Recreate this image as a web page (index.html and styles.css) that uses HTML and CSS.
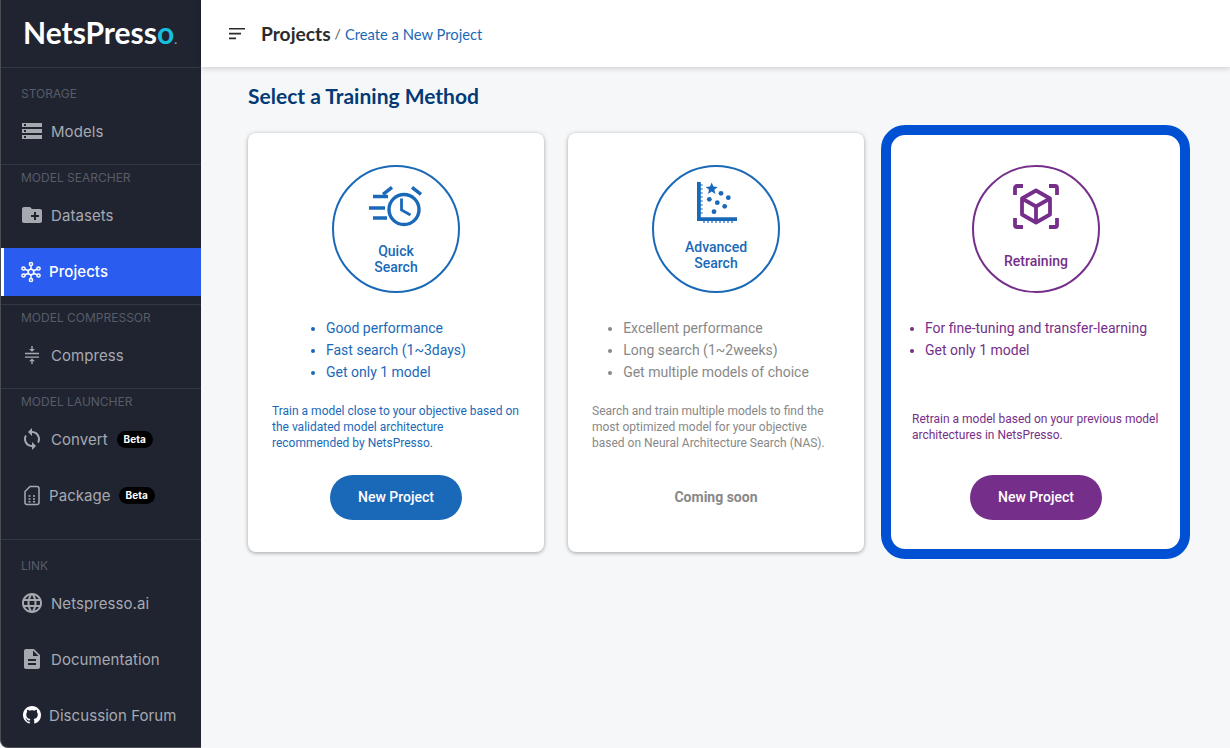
FILE: index.html
```html
<!DOCTYPE html>
<html lang="en">
<head>
    <meta charset="UTF-8">
    <meta name="viewport" content="width=device-width, initial-scale=1.0">
    <title>NetsPresso</title>
    <link rel="stylesheet" href="styles.css">
</head>
<body>
<div class="app">
    <nav class="sidebar">
        <div class="logo">NetsPress<span class="logoO">o</span><span class="logoDot">.</span></div>

        <div class="section first">
            <div class="label">STORAGE</div>
            <a class="item"><svg class="icon" viewBox="0 0 24 24"><path d="M2 20h20v-4H2v4zm2-3h2v2H4v-2zM2 4v4h20V4H2zm4 3H4V5h2v2zm-4 7h20v-4H2v4zm2-3h2v2H4v-2z"/></svg>Models</a>
        </div>

        <div class="section">
            <div class="label">MODEL SEARCHER</div>
            <a class="item"><svg class="icon" viewBox="0 0 24 24"><path d="M20 6h-8l-2-2H4c-1.11 0-1.99.89-1.99 2L2 18c0 1.11.89 2 2 2h16c1.11 0 2-.89 2-2V8c0-1.11-.89-2-2-2zm-1 8h-3v3h-2v-3h-3v-2h3V9h2v3h3v2z"/></svg>Datasets</a>
            <a class="item active"><svg class="icon outline" viewBox="0 0 24 24" stroke="#fff" stroke-width="1.5"><circle cx="12" cy="12" r="2.8"/><circle cx="12" cy="4" r="1.6"/><circle cx="12" cy="20" r="1.6"/><circle cx="4.500" cy="8.500" r="1.6"/><circle cx="19.500" cy="8.500" r="1.6"/><circle cx="4.500" cy="15.500" r="1.6"/><circle cx="19.500" cy="15.500" r="1.6"/><path d="M12 5.600v3.600M12 14.800v3.600M6 9.200l3.500 1.600M18 9.200l-3.500 1.600M6 14.800l3.500-1.600M18 14.800l-3.500-1.600"/></svg>Projects</a>
        </div>

        <div class="section compress">
            <div class="label">MODEL COMPRESSOR</div>
            <a class="item"><svg class="icon" viewBox="0 0 24 24"><path d="M5 9.800h14v1.400H5zM5 13.400h14v1.400H5zM11.300 3h1.400v3H15l-3 2.700L9 6h2.300zM12 15.600l3 2.700h-2.300V21h-1.400v-2.700H9z"/></svg>Compress</a>
        </div>

        <div class="section launcher">
            <div class="label">MODEL LAUNCHER</div>
            <a class="item"><svg class="icon" viewBox="0 0 24 24"><path d="M12 4V1L8 5l4 4V6c3.310 0 6 2.690 6 6 0 1.010-.25 1.970-.7 2.800l1.460 1.460C19.540 15.030 20 13.570 20 12c0-4.420-3.580-8-8-8zm0 14c-3.310 0-6-2.690-6-6 0-1.010.25-1.970.7-2.800L5.240 7.740C4.460 8.970 4 10.430 4 12c0 4.420 3.580 8 8 8v3l4-4-4-4v3z"/></svg>Convert<span class="beta">Beta</span></a>
            <a class="item tight"><svg class="icon outline" viewBox="0 0 24 24" stroke="#a7a9b0" stroke-width="1.500"><path d="M10 3.500h7a2 2 0 0 1 2 2v14a2 2 0 0 1-2 2H7a2 2 0 0 1-2-2V8.500z"/><path d="M8.500 13h2M13 13h2M8.500 16h2M13 16h2M8.500 18.800h2M13 18.800h2"/></svg>Package<span class="beta">Beta</span></a>
        </div>

        <div class="section links">
            <div class="label">LINK</div>
            <a class="item"><svg class="icon" viewBox="0 0 24 24"><path d="M11.990 2C6.470 2 2 6.480 2 12s4.470 10 9.990 10C17.520 22 22 17.520 22 12S17.520 2 11.990 2zm6.930 6h-2.950c-.32-1.250-.78-2.450-1.380-3.560 1.840.63 3.370 1.910 4.330 3.560zM12 4.040c.83 1.200 1.480 2.530 1.910 3.960h-3.820c.43-1.430 1.080-2.760 1.910-3.960zM4.260 14C4.100 13.360 4 12.690 4 12s.1-1.360.26-2h3.380c-.08.66-.14 1.320-.14 2 0 .68.06 1.340.14 2H4.260zm.82 2h2.950c.32 1.250.78 2.450 1.380 3.560-1.840-.63-3.370-1.900-4.330-3.560zm2.950-8H5.080c.96-1.660 2.490-2.930 4.330-3.560C8.810 5.550 8.350 6.750 8.030 8zM12 19.960c-.83-1.200-1.480-2.530-1.910-3.960h3.820c-.43 1.430-1.080 2.760-1.910 3.960zM14.340 14H9.660c-.09-.66-.16-1.320-.16-2 0-.68.07-1.350.16-2h4.680c.09.65.16 1.320.16 2 0 .68-.07 1.340-.16 2zm.25 5.560c.6-1.110 1.060-2.310 1.380-3.560h2.950c-.96 1.650-2.490 2.930-4.330 3.560zM16.360 14c.08-.66.14-1.320.14-2 0-.68-.06-1.340-.14-2h3.380c.16.64.26 1.310.26 2s-.1 1.360-.26 2h-3.380z"/></svg>Netspresso.ai</a>
            <a class="item"><svg class="icon" viewBox="0 0 24 24"><path d="M14 2H6c-1.100 0-1.990.9-1.990 2L4 20c0 1.100.89 2 1.990 2H18c1.100 0 2-.9 2-2V8l-6-6zm2 16H8v-2h8v2zm0-4H8v-2h8v2zm-3-5V3.500L18.500 9H13z"/></svg>Documentation</a>
            <a class="item tight"><svg class="icon github" viewBox="0 0 16 16"><path d="M8 0C3.580 0 0 3.580 0 8c0 3.540 2.290 6.530 5.470 7.590.4.07.55-.17.55-.38 0-.19-.01-.82-.01-1.490-2.010.37-2.530-.49-2.690-.94-.09-.23-.48-.94-.82-1.130-.28-.15-.68-.52-.01-.53.63-.01 1.080.58 1.230.82.72 1.210 1.870.87 2.330.66.07-.52.28-.87.51-1.070-1.780-.2-3.640-.89-3.640-3.950 0-.87.31-1.590.82-2.150-.08-.2-.36-1.020.08-2.120 0 0 .67-.21 2.200.82.64-.18 1.320-.27 2-.27.68 0 1.360.09 2 .27 1.530-1.040 2.200-.82 2.200-.82.44 1.100.16 1.920.08 2.120.51.56.82 1.270.82 2.150 0 3.070-1.870 3.750-3.650 3.950.29.25.54.73.54 1.480 0 1.070-.01 1.930-.01 2.200 0 .21.15.46.55.38A8.013 8.013 0 0016 8c0-4.420-3.580-8-8-8z"/></svg>Discussion Forum</a>
        </div>
    </nav>

    <div class="content">
        <header class="topbar">
            <svg class="menuIcon" viewBox="0 0 16 12"><path d="M0 0h16v1.600H0zM0 4.800h12v1.600H0zM0 9.600h7v1.600H0z"/></svg>
            <span class="crumb">Projects</span>
            <span class="slash">/</span>
            <span class="crumbLink">Create a New Project</span>
        </header>

        <main class="main">
            <h1 class="heading">Select a Training Method</h1>
            <div class="cards">
                <div class="card blue">
                    <div class="circle quick">
                        <svg class="methodIcon" width="54" height="42" viewBox="0 0 54 42" fill="none" stroke="#1a69b8">
                            <circle cx="35" cy="23.500" r="15" stroke-width="3.400"/>
                            <path d="M32.500 12.500V24l9 5" stroke-width="2.800"/>
                            <path d="M4 10.500h15M0 22h16M4 32h14" stroke-width="3.400"/>
                            <path d="M14 8.300l9-7M43 1.300l9 7" stroke-width="3.400"/>
                        </svg>
                        <div class="circleText">Quick<br>Search</div>
                    </div>
                    <ul class="points">
                        <li>Good performance</li>
                        <li>Fast search (1~3days)</li>
                        <li>Get only 1 model</li>
                    </ul>
                    <p class="desc">Train a model close to your objective based on the validated model architecture recommended by NetsPresso.</p>
                    <div class="action"><button class="newBtn">New Project</button></div>
                </div>

                <div class="card gray">
                    <div class="circle advanced">
                        <svg class="methodIcon" width="42" height="42" viewBox="0 0 42 42" fill="#1a69b8">
                            <path d="M2 1h3.800v35.200H42V40H2z"/>
                            <path d="M5 4h2.800M5 8h2.800M5 12h2.800M5 16h2.800M5 20h2.800M5 24h2.800M5 28h2.800M5 32h2.800M9 39v3M13 39v3M17 39v3M21 39v3M25 39v3M29 39v3M33 39v3M37 39v3" stroke="#1a69b8" stroke-width="1.200"/>
                            <path d="M16.700 1.500l1.700 4 4.300.4-3.300 2.800 1 4.200-3.700-2.300-3.700 2.300 1-4.200-3.300-2.800 4.300-.4z"/>
                            <circle cx="26" cy="12.300" r="2.400"/>
                            <circle cx="14.300" cy="18.300" r="2.400"/>
                            <circle cx="33.300" cy="16.700" r="2.400"/>
                            <circle cx="22.300" cy="21.700" r="2.400"/>
                            <circle cx="29.700" cy="25.300" r="2.400"/>
                            <circle cx="19" cy="30.700" r="2.400"/>
                        </svg>
                        <div class="circleText">Advanced<br>Search</div>
                    </div>
                    <ul class="points">
                        <li>Excellent performance</li>
                        <li>Long search (1~2weeks)</li>
                        <li>Get multiple models of choice</li>
                    </ul>
                    <p class="desc">Search and train multiple models to find the most optimized model for your objective based on Neural Architecture Search (NAS).</p>
                    <div class="action"><span class="soon">Coming soon</span></div>
                </div>

                <div class="card purple selected">
                    <div class="circle retrain">
                        <svg class="methodIcon" width="48" height="48" viewBox="0 0 48 48" fill="none" stroke="#752f8a" stroke-width="3.800">
                            <path d="M3 12V5a2 2 0 0 1 2-2h6M37 3h6a2 2 0 0 1 2 2v7M3 35v7a2 2 0 0 0 2 2h6M45 35v7a2 2 0 0 1-2 2h-6"/>
                            <path d="M24 7.500l14 8v16l-14 8-14-8v-16z" stroke-linejoin="round"/>
                            <path d="M10 15.500l14 8 14-8M24 23.500v16"/>
                        </svg>
                        <div class="circleText">Retraining</div>
                    </div>
                    <ul class="points">
                        <li>For fine-tuning and transfer-learning</li>
                        <li>Get only 1 model</li>
                    </ul>
                    <p class="desc">Retrain a model based on your previous model architectures in NetsPresso.</p>
                    <div class="action"><button class="newBtn">New Project</button></div>
                </div>
            </div>
        </main>
    </div>
</div>
</body>
</html>
```

FILE: styles.css
```css
*{
    margin:0;
    padding:0;
    box-sizing:border-box;
}
body{
    background:#f6f7f9;
    overflow:hidden;
}
.app{
    display:flex;
    height:100vh;
}

/* sidebar */
.sidebar{
    width:201px;
    flex-shrink:0;
    background:#1f2430;
    border-left:1px solid #4b4d52;
    border-bottom:1px solid #4b4d52;
    border-bottom-left-radius:8px;
    font-family:"Inter",sans-serif;
    overflow:hidden;
}
.logo{
    height:67px;
    padding:14px 0 0 22px;
    font:700 30px/36px "Lato",sans-serif;
    color:#fff;
    white-space:nowrap;
}
.logoO{
    color:#18bfdd;
}
.logoDot{
    font-size:12px;
    color:#8d99a6;
}
.section{
    border-top:1px solid #333845;
    padding:5px 0 0;
}
.section.first{
    padding:18px 0 1px;
}
.section.compress{
    padding-bottom:1px;
}
.section.launcher{
    padding-bottom:12px;
}
.section.links{
    padding-top:18px;
}
.label{
    padding-left:20px;
    margin-bottom:5px;
    font-size:12px;
    line-height:16px;
    color:#585c68;
}
.item{
    display:flex;
    align-items:center;
    gap:7px;
    height:48px;
    margin-bottom:8px;
    padding-left:19px;
    font-size:15px;
    letter-spacing:.07px;
    color:#a7a9b0;
}
.item.tight{
    gap:5px;
}
.item.active{
    margin-top:9px;
    padding-left:15px;
    padding-bottom:1px;
    gap:6px;
    background:#2a5cf0;
    border-left:3px solid #fff;
    color:#fff;
    font-weight:500;
}
.icon{
    width:24px;
    height:24px;
    fill:#a7a9b0;
    flex-shrink:0;
}
.icon.outline{
    fill:none;
}
.github{
    fill:#fff;
    padding:3px;
}
.beta{
    margin-left:2px;
    width:36px;
    height:17px;
    border-radius:9px;
    background:#000;
    color:#fff;
    font-size:10px;
    font-weight:700;
    line-height:17px;
    text-align:center;
}
.tight .beta{
    margin-left:3px;
}

/* top */
.content{
    flex:1;
    min-width:0;
}
.topbar{
    display:flex;
    align-items:center;
    height:67px;
    padding-left:28px;
    background:#fff;
    box-shadow:0 1px 6px rgba(0,0,0,.2);
    font-family:"Lato",sans-serif;
}
.menuIcon{
    width:16px;
    height:12px;
    margin-right:16px;
    fill:#2b2b2b;
}
.crumb{
    font-size:19.2px;
    font-weight:700;
    color:#2b2b2b;
}
.slash{
    margin:0 4px;
    font-size:14px;
    color:#555;
}
.crumbLink{
    font-size:14.750px;
    color:#1a69b8;
}

/* main */
.main{
    padding:16px 0 0 47px;
}
.heading{
    font:700 21px/26px "Lato",sans-serif;
    color:#033a75;
    margin-bottom:24px;
}
.cards{
    display:grid;
    grid-template-columns:repeat(3,296px);
    gap:24px;
}
.card{
    padding:32px 24px;
    background:#fff;
    border-radius:8px;
    box-shadow:0 1px 4px rgba(0,0,0,.35);
    font-family:"Roboto",sans-serif;
}
.selected{
    margin:-8px -6px -7px -7px;
    padding:30px 20px 29px 21px;
    border:10px solid #0050d4;
    border-radius:24px;
    box-shadow:none;
}
.blue{
    color:#1a69b8;
}
.gray{
    color:#888;
}
.purple{
    color:#752f8a;
}
.circle{
    display:flex;
    flex-direction:column;
    align-items:center;
    width:128px;
    height:128px;
    margin:0 auto;
    border:2px solid #1a69b8;
    border-radius:50%;
}
.purple .circle{
    border-color:#752f8a;
}
.circle.quick{
    padding-top:19px;
}
.circle.advanced{
    padding-top:14px;
}
.circle.retrain{
    padding-top:16px;
}
.circleText{
    margin-top:15px;
    font-size:14px;
    font-weight:500;
    line-height:16px;
    text-align:center;
    color:#1a69b8;
}
.advanced .circleText{
    margin-top:16px;
}
.retrain .circleText{
    margin-top:22px;
    color:#752f8a;
}
.points{
    display:table;
    margin:24px auto 12px;
    height:66px;
    padding:0 12px;
    font-size:14px;
    line-height:22px;
}
.desc{
    display:flex;
    align-items:center;
    height:64px;
    font-size:12px;
    line-height:16px;
}
.action{
    display:flex;
    justify-content:center;
    align-items:center;
    height:45px;
    margin-top:16px;
}
.newBtn{
    width:132px;
    height:45px;
    padding-bottom:2px;
    border:0;
    border-radius:23px;
    background:#1a69b8;
    color:#fff;
    font:500 14px "Roboto",sans-serif;
}
.purple .newBtn{
    background:#752f8a;
}
.soon{
    padding-bottom:2px;
    font-size:14px;
    font-weight:700;
    color:#888;
}
```
